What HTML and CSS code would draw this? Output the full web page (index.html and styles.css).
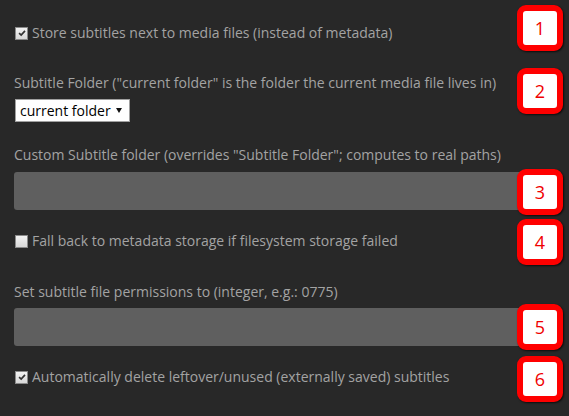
FILE: index.html
```html
<!DOCTYPE html>
<html>
<head>
<meta charset="utf-8">
<link rel="stylesheet" href="styles.css">
</head>
<body>
<div class="page">
  <label class="check row1"><span class="box"><svg viewBox="0 0 12 12" width="12" height="12"><path d="M2.5 6.2 L5 8.6 L9.6 3.4" fill="none" stroke="#333" stroke-width="2"/></svg></span>Store subtitles next to media files (instead of metadata)</label>

  <div class="label l2">Subtitle Folder ("current folder" is the folder the current media file lives in)</div>
  <div class="select"><span>current folder</span><span class="arrow"></span></div>

  <div class="label l3">Custom Subtitle folder (overrides "Subtitle Folder"; computes to real paths)</div>
  <div class="field"></div>

  <label class="check row4"><span class="box"></span>Fall back to metadata storage if filesystem storage failed</label>

  <div class="label l5">Set subtitle file permissions to (integer, e.g.: 0775)</div>
  <div class="field"></div>

  <label class="check row6"><span class="box"><svg viewBox="0 0 12 12" width="12" height="12"><path d="M2.5 6.2 L5 8.6 L9.6 3.4" fill="none" stroke="#333" stroke-width="2"/></svg></span>Automatically delete leftover/unused (externally saved) subtitles</label>

  <div class="badge b1">1</div>
  <div class="badge b2">2</div>
  <div class="badge b3">3</div>
  <div class="badge b4">4</div>
  <div class="badge b5">5</div>
  <div class="badge b6">6</div>
</div>
</body>
</html>
```
FILE: styles.css
```css
html, body {
  margin: 0;
  padding: 0;
  background: #282828;
}
.page {
  position: relative;
  width: 569px;
  height: 416px;
  overflow: hidden;
  font-family: "Open Sans", "Liberation Sans", sans-serif;
  font-size: 14px;
  line-height: 18px;
  color: #a3a3a3;
  padding-left: 14px;
  box-sizing: border-box;
  display: flex;
  flex-direction: column;
  align-items: flex-start;
}
.check {
  display: flex;
  align-items: center;
  gap: 4px;
  height: 18px;
  padding-left: 1px;
  white-space: nowrap;
}
.label { white-space: nowrap; }
.box {
  width: 11px;
  height: 11px;
  border: 1px solid #8a8a8a;
  background: linear-gradient(#f2f2f2, #d8d8d8);
  display: flex;
  align-items: center;
  justify-content: center;
  flex: none;
}
.box svg {
  width: 10px;
  height: 10px;
}
.row1 { margin-top: 24px; }
.l2 { margin-top: 32px; }
.select {
  position: relative;
  margin-top: 7px;
  margin-left: 1px;
  width: 115px;
  height: 23px;
  box-sizing: border-box;
  border: 1px solid #a0a0a0;
  background: #fff;
  color: #000;
  font-size: 14px;
  line-height: 21px;
  padding-left: 4px;
}
.arrow {
  position: absolute;
  right: 7px;
  top: 8px;
  width: 0;
  height: 0;
  border-left: 3.5px solid transparent;
  border-right: 3.5px solid transparent;
  border-top: 5px solid #111;
}
.l3 { margin-top: 24px; }
.field {
  margin-top: 8px;
  width: 530px;
  height: 38px;
  border-radius: 3px;
  background: #5f5f5f;
}
.row4 { margin-top: 22px; }
.l5 { margin-top: 33px; }
.l5 + .field { margin-top: 7px; }
.row6 { margin-top: 22px; }

.badge {
  position: absolute;
  left: 517px;
  width: 46px;
  height: 46px;
  box-sizing: border-box;
  border: 6px solid #ff0000;
  border-radius: 9px;
  background: #fff;
  color: #f00000;
  font-size: 18px;
  line-height: 34px;
  text-align: center;
  box-shadow: 1px 1px 2px rgba(0,0,0,0.7);
}
.b1 { top: 5px; }
.b2 { top: 68px; }
.b3 { top: 169px; }
.b4 { top: 219px; }
.b5 { top: 304px; }
.b6 { top: 356px; }
```
